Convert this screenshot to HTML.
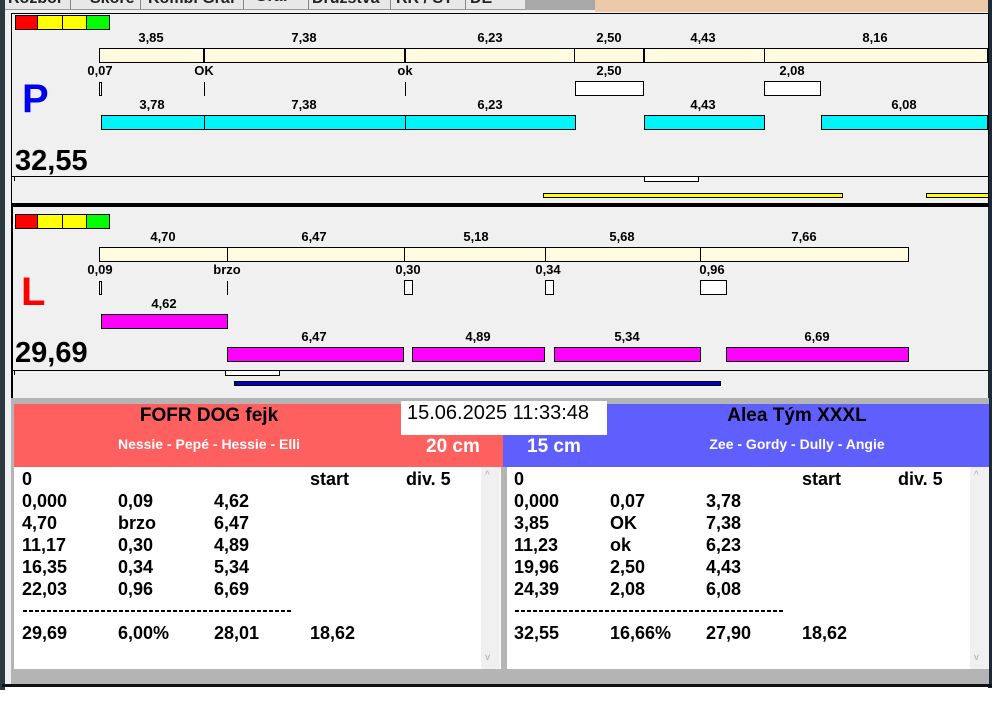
<!DOCTYPE html>
<html><head><meta charset="utf-8"><style>
*{margin:0;padding:0;box-sizing:border-box}
body{width:995px;height:716px;background:#fff;position:relative;overflow:hidden;font-family:"Liberation Sans",Arial,sans-serif;font-weight:bold}
div{position:absolute}
.l{font-size:13px;line-height:14px;transform:translateX(-50%);white-space:nowrap;color:#000}
.b{border:1px solid #000}
.y{background:#fefbe0}
.c{background:#00f4f8}
.m{background:#ff00ff}
.w{background:#fff}
.t{font-size:18px;line-height:22px;white-space:nowrap}
.d{height:2px;background:repeating-linear-gradient(90deg,#000 0 4px,transparent 4px 6px)}
</style></head><body>
<div style="left:0;top:0;width:5px;height:690px;background:#2c3a40"></div>
<div style="left:5px;top:0;width:985px;height:686px;background:#f0f0f0"></div>
<div style="left:5px;top:0;width:985px;height:10px;background:#e8e8e8;border-bottom:1px solid #999"></div>
<div style="left:525px;top:0;width:70px;height:10px;background:#a8a8a8"></div>
<div style="left:595px;top:0;width:395px;height:12px;background:#ecc9a9"></div>
<div style="left:8px;top:-10px;font-size:16px;white-space:nowrap;color:#222">Rozbor</div>
<div style="left:70px;top:0;width:1px;height:9px;background:#888"></div>
<div style="left:90px;top:-10px;font-size:16px;color:#222">Skóre</div>
<div style="left:140px;top:0;width:1px;height:9px;background:#888"></div>
<div style="left:148px;top:-10px;font-size:16px;color:#222">Kombi Graf</div>
<div style="left:243px;top:0;width:1px;height:9px;background:#888"></div>
<div style="left:255px;top:-12px;font-size:16px;color:#222">Graf</div>
<div style="left:308px;top:0;width:1px;height:9px;background:#888"></div>
<div style="left:312px;top:-10px;font-size:16px;color:#222">Družstva</div>
<div style="left:390px;top:0;width:1px;height:9px;background:#888"></div>
<div style="left:396px;top:-10px;font-size:16px;color:#222">RR / ST</div>
<div style="left:465px;top:0;width:1px;height:9px;background:#888"></div>
<div style="left:470px;top:-10px;font-size:16px;color:#222">DE</div>
<div style="left:988px;top:0;width:4px;height:688px;background:#1a2a3a"></div>
<div style="left:11px;top:13px;width:978px;height:192px;border:1px solid #000;border-bottom:none"></div>
<div style="left:15px;top:15px;width:23px;height:15px;background:#f00" class="b"></div>
<div style="left:37px;top:15px;width:26px;height:15px;background:#ff0" class="b"></div>
<div style="left:62px;top:15px;width:25px;height:15px;background:#ff0" class="b"></div>
<div style="left:86px;top:15px;width:24px;height:15px;background:#0f0" class="b"></div>
<div class="l" style="left:151px;top:31px">3,85</div>
<div class="l" style="left:304px;top:31px">7,38</div>
<div class="l" style="left:490px;top:31px">6,23</div>
<div class="l" style="left:609px;top:31px">2,50</div>
<div class="l" style="left:703px;top:31px">4,43</div>
<div class="l" style="left:875px;top:31px">8,16</div>
<div class="b y" style="left:99px;top:48px;width:889px;height:15px"></div>
<div style="left:203px;top:48px;width:2px;height:15px;background:#000"></div>
<div style="left:404px;top:48px;width:2px;height:15px;background:#000"></div>
<div style="left:574px;top:48px;width:1px;height:15px;background:#000"></div>
<div style="left:643px;top:48px;width:2px;height:15px;background:#000"></div>
<div style="left:764px;top:48px;width:1px;height:15px;background:#000"></div>
<div class="l" style="left:100px;top:64px">0,07</div>
<div class="l" style="left:204px;top:64px">OK</div>
<div class="l" style="left:405px;top:64px">ok</div>
<div class="l" style="left:609px;top:64px">2,50</div>
<div class="l" style="left:792px;top:64px">2,08</div>
<div class="b w" style="left:99px;top:82px;width:3px;height:14px"></div>
<div style="left:204px;top:82px;width:1px;height:14px;background:#000"></div>
<div style="left:405px;top:82px;width:1px;height:14px;background:#000"></div>
<div class="b w" style="left:575px;top:81px;width:69px;height:15px"></div>
<div class="b w" style="left:764px;top:81px;width:57px;height:15px"></div>
<div style="left:22px;top:77px;font-size:40px;line-height:44px;color:#0000ee">P</div>
<div class="l" style="left:152px;top:98px">3,78</div>
<div class="l" style="left:304px;top:98px">7,38</div>
<div class="l" style="left:490px;top:98px">6,23</div>
<div class="l" style="left:703px;top:98px">4,43</div>
<div class="l" style="left:904px;top:98px">6,08</div>
<div class="b c" style="left:101px;top:115px;width:104px;height:15px"></div>
<div class="b c" style="left:204px;top:115px;width:202px;height:15px"></div>
<div class="b c" style="left:405px;top:115px;width:171px;height:15px"></div>
<div class="b c" style="left:644px;top:115px;width:121px;height:15px"></div>
<div class="b c" style="left:821px;top:115px;width:167px;height:15px"></div>
<div style="left:15px;top:145px;font-size:29px;line-height:32px">32,55</div>
<div style="left:12px;top:176px;width:977px;height:1px;background:#000"></div>
<div style="left:14px;top:176px;width:1px;height:5px;background:#000"></div>
<div class="b w" style="left:644px;top:176px;width:55px;height:6px"></div>
<div class="b" style="left:543px;top:193px;width:300px;height:5px;background:#ff0"></div>
<div class="b" style="left:926px;top:193px;width:63px;height:5px;background:#ff0"></div>
<div style="left:11px;top:203px;width:978px;height:4px;background:#000"></div>
<div style="left:11px;top:207px;width:2px;height:193px;background:#000"></div>
<div style="left:15px;top:214px;width:23px;height:15px;background:#f00" class="b"></div>
<div style="left:37px;top:214px;width:26px;height:15px;background:#ff0" class="b"></div>
<div style="left:62px;top:214px;width:25px;height:15px;background:#ff0" class="b"></div>
<div style="left:86px;top:214px;width:24px;height:15px;background:#0f0" class="b"></div>
<div class="l" style="left:163px;top:230px">4,70</div>
<div class="l" style="left:314px;top:230px">6,47</div>
<div class="l" style="left:476px;top:230px">5,18</div>
<div class="l" style="left:622px;top:230px">5,68</div>
<div class="l" style="left:804px;top:230px">7,66</div>
<div class="b y" style="left:99px;top:247px;width:810px;height:15px"></div>
<div style="left:227px;top:247px;width:1px;height:15px;background:#000"></div>
<div style="left:404px;top:247px;width:1px;height:15px;background:#000"></div>
<div style="left:545px;top:247px;width:1px;height:15px;background:#000"></div>
<div style="left:700px;top:247px;width:1px;height:15px;background:#000"></div>
<div class="l" style="left:100px;top:263px">0,09</div>
<div class="l" style="left:227px;top:263px">brzo</div>
<div class="l" style="left:408px;top:263px">0,30</div>
<div class="l" style="left:548px;top:263px">0,34</div>
<div class="l" style="left:712px;top:263px">0,96</div>
<div class="b w" style="left:99px;top:281px;width:3px;height:14px"></div>
<div style="left:227px;top:281px;width:1px;height:14px;background:#000"></div>
<div class="b w" style="left:404px;top:280px;width:9px;height:15px"></div>
<div class="b w" style="left:545px;top:280px;width:9px;height:15px"></div>
<div class="b w" style="left:700px;top:280px;width:27px;height:15px"></div>
<div style="left:21px;top:270px;font-size:40px;line-height:44px;color:#f00">L</div>
<div class="l" style="left:164px;top:297px">4,62</div>
<div class="b m" style="left:101px;top:314px;width:127px;height:15px"></div>
<div style="left:15px;top:337px;font-size:29px;line-height:32px">29,69</div>
<div class="l" style="left:314px;top:330px">6,47</div>
<div class="l" style="left:478px;top:330px">4,89</div>
<div class="l" style="left:627px;top:330px">5,34</div>
<div class="l" style="left:817px;top:330px">6,69</div>
<div class="b m" style="left:227px;top:347px;width:177px;height:15px"></div>
<div class="b m" style="left:412px;top:347px;width:133px;height:15px"></div>
<div class="b m" style="left:554px;top:347px;width:147px;height:15px"></div>
<div class="b m" style="left:726px;top:347px;width:183px;height:15px"></div>
<div style="left:12px;top:370px;width:977px;height:1px;background:#000"></div>
<div style="left:14px;top:370px;width:1px;height:5px;background:#000"></div>
<div class="b w" style="left:225px;top:370px;width:55px;height:6px"></div>
<div style="left:234px;top:381px;width:487px;height:5px;background:#0000c0;border:1px solid #000"></div>
<div style="left:11px;top:398px;width:978px;height:288px;background:#b4b4b4"></div>
<div style="left:14px;top:404px;width:489px;height:63px;background:#fe5f5f"></div>
<div style="left:503px;top:404px;width:486px;height:63px;background:#5f5ffe"></div>
<div style="left:401px;top:401px;width:206px;height:34px;background:#fff;font-weight:normal;font-size:20px;line-height:22px;padding:1px 0 0 6px">15.06.2025 11:33:48</div>
<div style="left:209px;top:405px;font-size:19px;transform:translateX(-50%);white-space:nowrap">FOFR DOG fejk</div>
<div style="left:209px;top:436px;font-size:14px;color:#fff;transform:translateX(-50%);white-space:nowrap">Nessie - Pepé - Hessie - Elli</div>
<div style="left:426px;top:436px;font-size:19px;color:#fff">20 cm</div>
<div style="left:527px;top:436px;font-size:19px;color:#fff">15 cm</div>
<div style="left:797px;top:405px;font-size:19px;transform:translateX(-50%);white-space:nowrap">Alea Tým XXXL</div>
<div style="left:797px;top:436px;font-size:14px;color:#fff;transform:translateX(-50%);white-space:nowrap">Zee - Gordy - Dully - Angie</div>
<div style="left:14px;top:467px;width:487px;height:202px;background:#fff"></div>
<div style="left:481px;top:467px;width:19px;height:202px;background:#f0f0f0"></div>
<div style="left:485px;top:470px;font-size:10px;color:#aaa;font-weight:normal">^</div>
<div style="left:485px;top:652px;font-size:10px;color:#aaa;font-weight:normal">v</div>
<div style="left:507px;top:467px;width:482px;height:202px;background:#fff"></div>
<div style="left:970px;top:467px;width:19px;height:202px;background:#f0f0f0"></div>
<div style="left:974px;top:470px;font-size:10px;color:#aaa;font-weight:normal">^</div>
<div style="left:974px;top:652px;font-size:10px;color:#aaa;font-weight:normal">v</div>

<div class="t" style="left:22px;top:468px">0</div><div class="t" style="left:310px;top:468px">start</div><div class="t" style="left:406px;top:468px">div. 5</div>
<div class="t" style="left:22px;top:490px">0,000</div><div class="t" style="left:118px;top:490px">0,09</div><div class="t" style="left:214px;top:490px">4,62</div>
<div class="t" style="left:22px;top:512px">4,70</div><div class="t" style="left:118px;top:512px">brzo</div><div class="t" style="left:214px;top:512px">6,47</div>
<div class="t" style="left:22px;top:534px">11,17</div><div class="t" style="left:118px;top:534px">0,30</div><div class="t" style="left:214px;top:534px">4,89</div>
<div class="t" style="left:22px;top:556px">16,35</div><div class="t" style="left:118px;top:556px">0,34</div><div class="t" style="left:214px;top:556px">5,34</div>
<div class="t" style="left:22px;top:578px">22,03</div><div class="t" style="left:118px;top:578px">0,96</div><div class="t" style="left:214px;top:578px">6,69</div>
<div class="d" style="left:23px;top:610px;width:270px"></div>
<div class="t" style="left:22px;top:622px">29,69</div><div class="t" style="left:118px;top:622px">6,00%</div><div class="t" style="left:214px;top:622px">28,01</div><div class="t" style="left:310px;top:622px">18,62</div>

<div class="t" style="left:514px;top:468px">0</div><div class="t" style="left:802px;top:468px">start</div><div class="t" style="left:898px;top:468px">div. 5</div>
<div class="t" style="left:514px;top:490px">0,000</div><div class="t" style="left:610px;top:490px">0,07</div><div class="t" style="left:706px;top:490px">3,78</div>
<div class="t" style="left:514px;top:512px">3,85</div><div class="t" style="left:610px;top:512px">OK</div><div class="t" style="left:706px;top:512px">7,38</div>
<div class="t" style="left:514px;top:534px">11,23</div><div class="t" style="left:610px;top:534px">ok</div><div class="t" style="left:706px;top:534px">6,23</div>
<div class="t" style="left:514px;top:556px">19,96</div><div class="t" style="left:610px;top:556px">2,50</div><div class="t" style="left:706px;top:556px">4,43</div>
<div class="t" style="left:514px;top:578px">24,39</div><div class="t" style="left:610px;top:578px">2,08</div><div class="t" style="left:706px;top:578px">6,08</div>
<div class="d" style="left:515px;top:610px;width:270px"></div>
<div class="t" style="left:514px;top:622px">32,55</div><div class="t" style="left:610px;top:622px">16,66%</div><div class="t" style="left:706px;top:622px">27,90</div><div class="t" style="left:802px;top:622px">18,62</div>
<div style="left:2px;top:684px;width:990px;height:3px;background:#111"></div>
</body></html>
